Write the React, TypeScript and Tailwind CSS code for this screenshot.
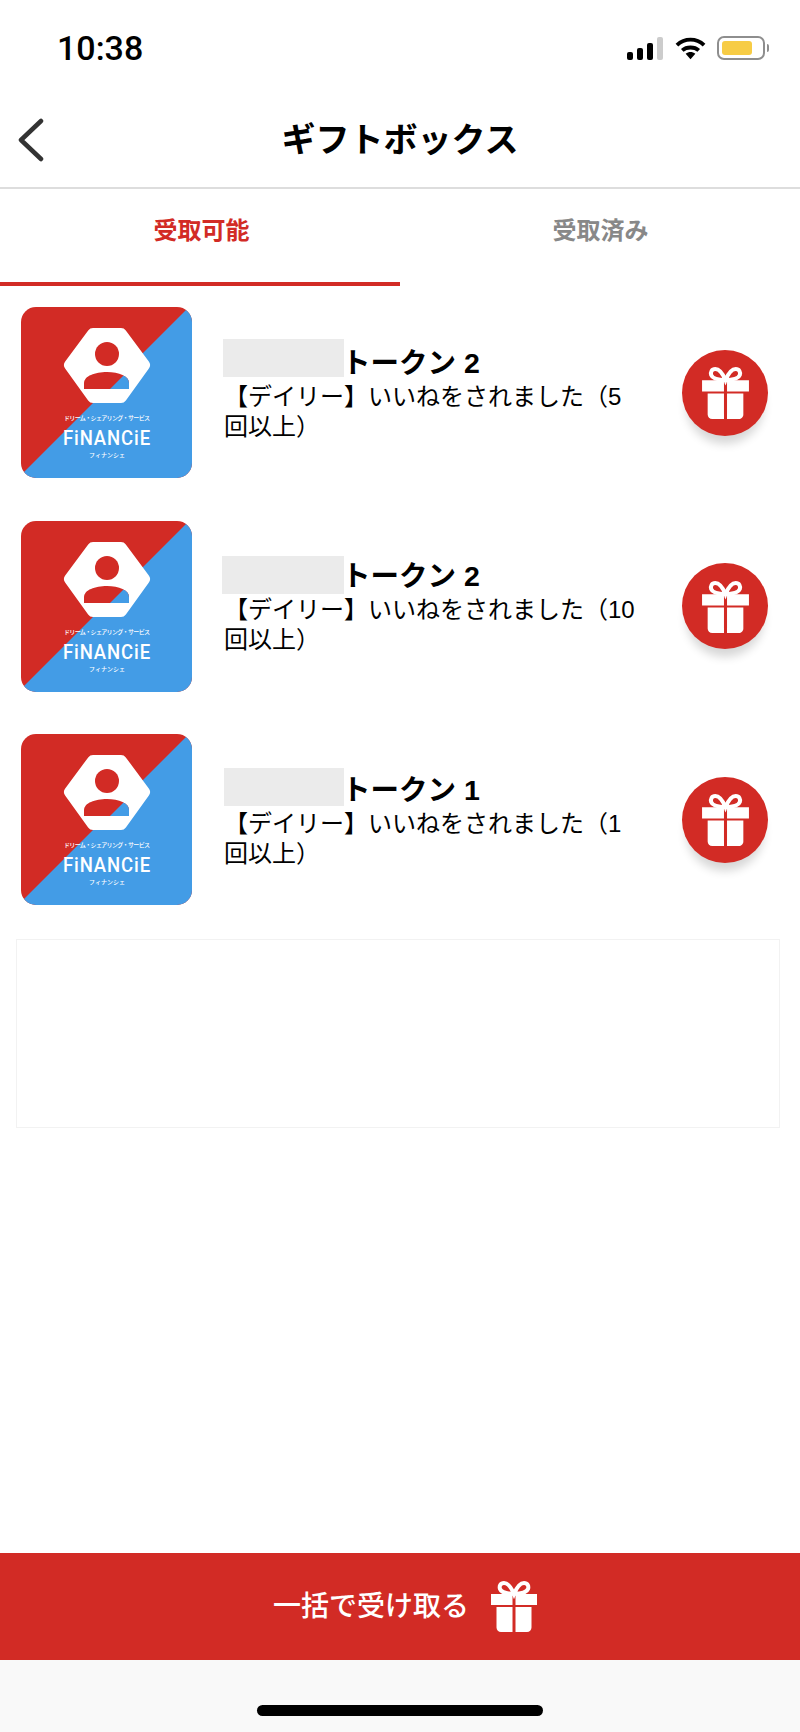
import React from "react";

const items = [
  { title: "トークン 2", text: "【デイリー】いいねをされました（5回以上）", mask: "w-[121px] -mt-[5px]" },
  { title: "トークン 2", text: "【デイリー】いいねをされました（10回以上）", mask: "w-[122px] -ml-px -mt-[1px]" },
  { title: "トークン 1", text: "【デイリー】いいねをされました（1回以上）", mask: "w-[120px] ml-px -mt-[3px]" },
];

function GiftIcon({ className }: { className: string }) {
  return (
    <svg viewBox="0 0 46 52" className={className} fill="white">
      <path d="M23 13C20.500 7 17 2 13 2C9.500 2 8 5 9 8C10 11 14 12.500 23 13C32 12.500 36 11 37 8C38 5 36.500 2 33 2C29 2 25.500 7 23 13Z" fill="none" stroke="white" strokeWidth="4" />
      <path d="M0 13H21.500V24H0ZM24.500 13H46V24H24.500Z" />
      <path d="M5.500 26H21.500V51H10C7.500 51 5.500 49 5.500 46.500ZM24.500 26H40.500V46.500C40.500 49 38.500 51 36 51H24.500Z" />
    </svg>
  );
}

function Logo() {
  return (
    <svg viewBox="0 0 171 171" className="w-[171px] h-[171px] shrink-0 rounded-[15px]">
      <defs>
        <clipPath id="blue-side">
          <path d="M171 0V171H0Z" />
        </clipPath>
      </defs>
      <rect width="171" height="171" fill="#d22b25" />
      <path d="M168 0H171V171H0V168Z" fill="#439ce6" />
      <path d="M72 27H100L123 58L100 90H72L49 58Z" fill="white" stroke="white" strokeWidth="12" strokeLinejoin="round" />
      <circle cx="86" cy="47" r="12" fill="#d22b25" />
      <path d="M63 82V76C63 69 74 65 86 65C98 65 108 69 108 76V82Z" fill="#d22b25" />
      <path d="M63 82V76C63 69 74 65 86 65C98 65 108 69 108 76V82Z" fill="#439ce6" clipPath="url(#blue-side)" />
      <text x="86" y="113" textAnchor="middle" fill="white" fontSize="6" fontWeight="500" textLength="86" fontFamily="'Noto Sans CJK JP', sans-serif">ドリーム・シェアリング・サービス</text>
      <text x="86" y="138" textAnchor="middle" fill="white" fontSize="21" fontWeight="500" letterSpacing="1" textLength="88" lengthAdjust="spacingAndGlyphs" fontFamily="'Roboto', sans-serif">FiNANCiE</text>
      <text x="86" y="150" textAnchor="middle" fill="white" fontSize="6" fontWeight="500" fontFamily="'Noto Sans CJK JP', sans-serif">フィナンシェ</text>
    </svg>
  );
}

export default function App() {
  return (
    <div className="w-[800px] h-[1732px] flex flex-col bg-white text-black font-['Liberation_Sans','Noto_Sans_CJK_JP',sans-serif]">
      {/* status bar */}
      <div className="h-[94px] shrink-0 flex justify-between items-start pt-[36px] pl-[57px] pr-[31px]">
        <span className="text-[34px] leading-[24px] font-medium font-['Roboto',sans-serif]">10:38</span>
        <div className="flex items-center">
          <div className="flex items-end gap-[4px] h-[24px] mr-[12px]">
            <span className="w-[6px] h-[8px] rounded-[2px] bg-black"></span>
            <span className="w-[6px] h-[12px] rounded-[2px] bg-black"></span>
            <span className="w-[6px] h-[17px] rounded-[2px] bg-black"></span>
            <span className="w-[6px] h-[23px] rounded-[2px] bg-[#cccccc]"></span>
          </div>
          <svg viewBox="0 0 32 24" className="w-[31px] h-[24px] mr-[11px]" fill="none" stroke="black" strokeWidth="4">
            <path d="M2 9C10 1.500 22 1.500 30 9" />
            <path d="M7.500 14.500C12 10.500 20 10.500 24.500 14.500" />
            <path d="M11 18L16 23.500L21 18C18 15.500 14 15.500 11 18Z" fill="black" stroke="none" />
          </svg>
          <div className="flex items-center">
            <div className="w-[48px] h-[24px] rounded-[7px] border-2 border-[#8e8e8e] p-[3px]">
              <div className="w-[30px] h-full rounded-[3px] bg-[#f7cc45]"></div>
            </div>
            <span className="ml-[2px] w-[2px] h-[8px] rounded-r-full bg-[#8e8e8e]"></span>
          </div>
        </div>
      </div>

      {/* header */}
      <div className="relative h-[95px] shrink-0 flex items-center justify-center border-b-2 border-[#dddddd]">
        <svg viewBox="0 0 26 44" className="absolute left-[18px] top-[24px] w-[26px] h-[44px]" fill="none" stroke="#333333" strokeWidth="4.500" strokeLinecap="round" strokeLinejoin="round">
          <path d="M23 3L3 22L23 41" />
        </svg>
        <h1 className="text-[34px] font-bold">ギフトボックス</h1>
      </div>

      {/* tabs */}
      <div className="h-[97px] shrink-0 flex text-[24px] font-bold">
        <div className="w-1/2 flex justify-center pt-[24px] pl-[3px] text-[#d22b25] border-b-[4px] border-[#d22b25]">受取可能</div>
        <div className="w-1/2 flex justify-center pt-[24px] pl-[1px] text-[#888888]">受取済み</div>
      </div>

      {/* gift list */}
      <div className="flex flex-col gap-[42.500px] pt-[21px]">
        {items.map((item, index) => (
          <div key={index} className="flex items-center h-[171px] pl-[21px] pr-[32px]">
            <Logo />
            <div className="ml-[32px] w-[416px]">
              <div className="flex items-end h-[38px] -ml-px">
                <span className={`self-start h-[38px] bg-[#ebebeb] ${item.mask}`}></span>
                <span className="-ml-[2px] mb-[2px] text-[28.500px] leading-[34px] font-bold">{item.title}</span>
              </div>
              <p className="text-[24px] leading-[30px]">{item.text}</p>
            </div>
            <button className="ml-auto w-[86px] h-[86px] rounded-full bg-[#d22b25] flex items-center justify-center shadow-[0_12px_10px_-4px_rgba(0,0,0,0.16)]">
              <GiftIcon className="w-[47px] h-[53px] mt-[2px]" />
            </button>
          </div>
        ))}
      </div>

      {/* empty ad slot */}
      <div className="mt-[34px] ml-[16px] mr-[20px] h-[189px] border border-[#f2f2f2]"></div>

      <div className="flex-1"></div>

      {/* bottom action */}
      <button className="h-[107px] shrink-0 flex items-center justify-center gap-[22px] pl-[10px] bg-[#d22b25] text-white text-[28px] font-medium">
        <span>一括で受け取る</span>
        <GiftIcon className="w-[46px] h-[52px]" />
      </button>
      <div className="h-[72px] shrink-0 flex justify-center bg-[#f9f9f9] pt-[45px]">
        <span className="w-[286px] h-[11px] rounded-full bg-black"></span>
      </div>
    </div>
  );
}
